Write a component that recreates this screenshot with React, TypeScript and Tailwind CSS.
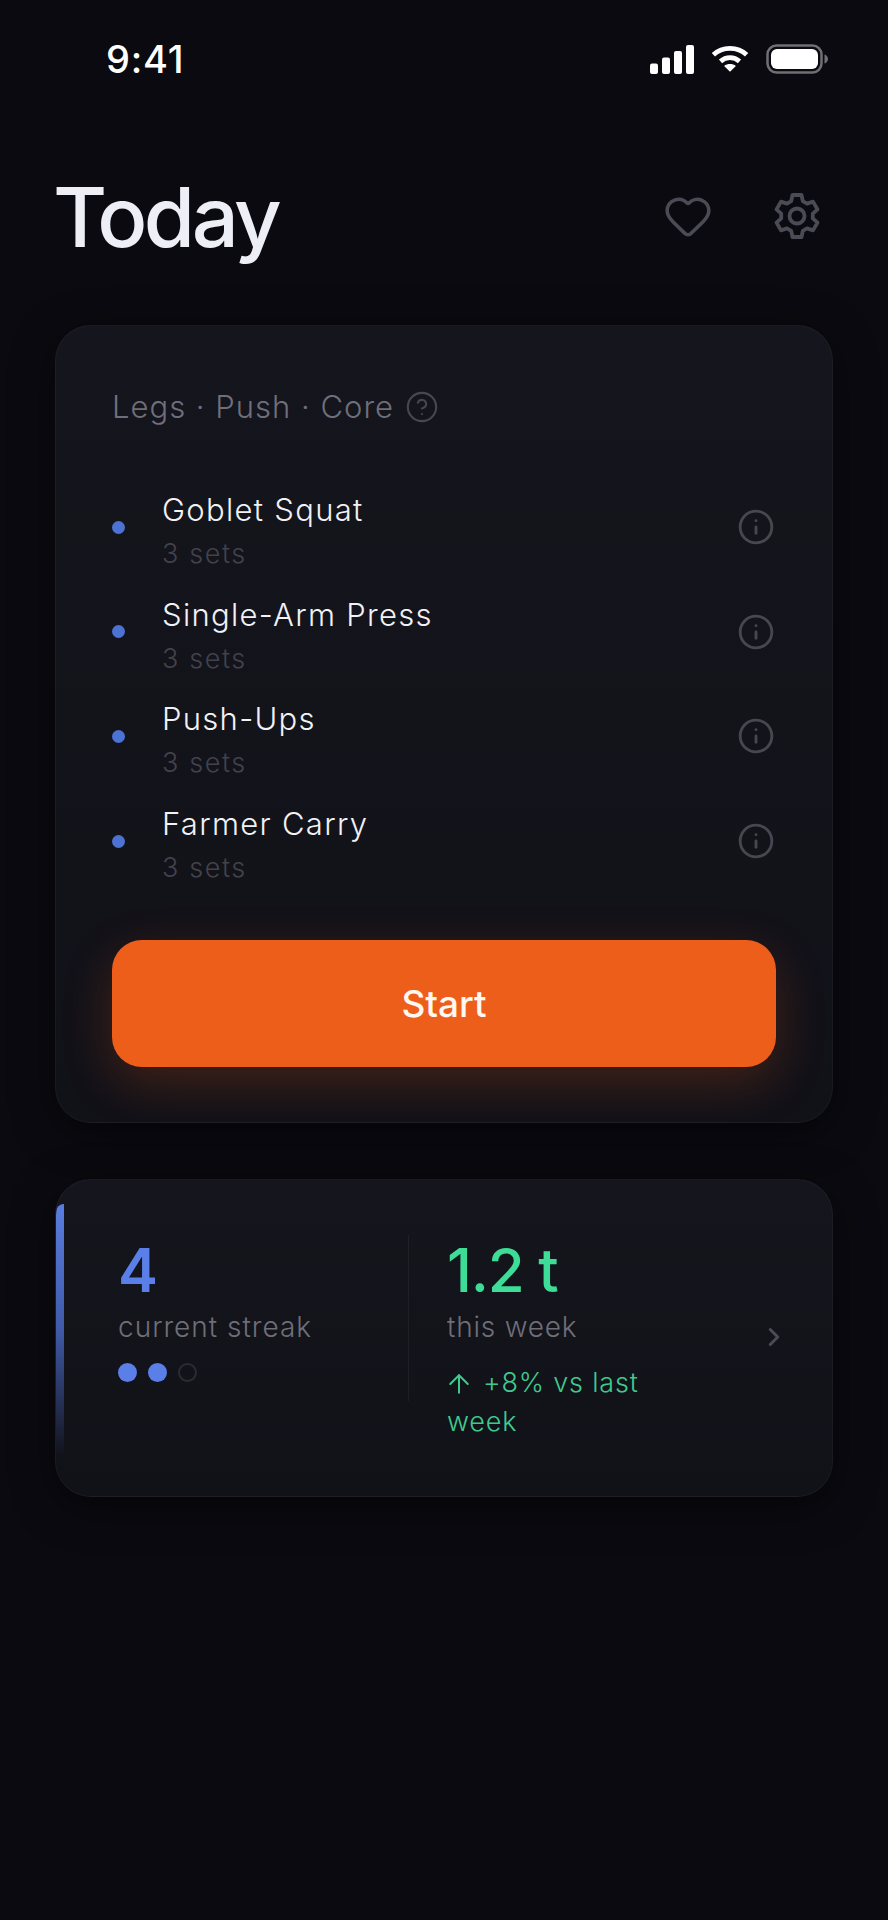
import { Heart, Info, CircleHelp, ChevronRight, ArrowUp } from 'lucide-react';

const exercises = ['Goblet Squat', 'Single-Arm Press', 'Push-Ups', 'Farmer Carry'];

const StatusIcons = () => (
  <div className="flex items-center gap-[17px]">
    <svg width="44" height="29" viewBox="0 0 44 29" fill="#fff">
      <rect x="0" y="18.500" width="8" height="10.500" rx="2" />
      <rect x="12" y="12.500" width="8" height="16.500" rx="2" />
      <rect x="24" y="6" width="8" height="23" rx="2" />
      <rect x="36" y="0" width="8" height="29" rx="2" />
    </svg>
    <svg width="38" height="28" viewBox="0 0 40 28" fill="none" stroke="#fff" strokeWidth="5">
      <path d="M2.500 9.500C12 .5 28 .5 37.500 9.500" />
      <path d="M10 16.500c5.800-5.200 14.200-5.200 20 0" />
      <path d="M20 27.500l-6.200-6.200c3.400-2.800 9-2.800 12.400 0z" fill="#fff" stroke="none" />
    </svg>
    <svg width="63" height="30" viewBox="0 0 63 30" fill="none">
      <rect x="1.500" y="1.500" width="54" height="27" rx="9" stroke="#6f6f74" strokeWidth="2.500" />
      <rect x="5" y="5" width="47" height="20" rx="6" fill="#fff" />
      <path d="M58.500 10.500c2 .5 3.500 2.400 3.500 4.500s-1.500 4-3.500 4.500z" fill="#6f6f74" />
    </svg>
  </div>
);

// six tooth cog, same shape as the reference
const Gear = () => (
  <svg width="52" height="52" viewBox="0 0 52 52" fill="none" stroke="#4b4b56" strokeWidth="3.800" strokeLinejoin="round">
    <path d="M21.500 5h9l1.300 6.200 4.200 2.400 6-2 4.500 7.800-4.700 4.200v4.800l4.700 4.200-4.500 7.800-6-2-4.200 2.400-1.300 6.200h-9l-1.300-6.200-4.200-2.400-6 2-4.500-7.800 4.700-4.200v-4.800l-4.700-4.200 4.500-7.800 6 2 4.200-2.400z" />
    <circle cx="26" cy="26" r="7.500" />
  </svg>
);

export default function App() {
  return (
    <div className="min-h-[1920px] w-full bg-[#0a0a10] font-['Inter',sans-serif]">
      <div className="flex h-[118px] items-start justify-between pl-[106px] pr-[59px] pt-[37px]">
        <span className="text-[38px] leading-[44px] font-medium tracking-[0.8px] text-white">9:41</span>
        <div className="pt-[7px]">
          <StatusIcons />
        </div>
      </div>

      <div className="px-[55px]">
        <div className="flex h-[207px] items-start justify-between pt-[51px]">
          <h1 className="-ml-[2px] text-[83px] leading-[96px] font-medium tracking-[-3.5px] text-[#eeeef6]">Today</h1>
          <div className="flex items-center gap-[58px] pr-[10px] pt-[21px]">
            <Heart size={50} strokeWidth={1.7} className="text-[#4b4b56]" />
            <Gear />
          </div>
        </div>

        <div className="h-[798px] rounded-[36px] border border-white/[0.04] bg-gradient-to-b from-[#15151d] to-[#111118] px-[56px] pt-[56px] shadow-[0_10px_40px_rgba(0,0,0,0.5)]">
          <div className="flex h-[50px] items-center gap-[11px] text-[31px] leading-[50px] font-light tracking-[1px] text-[#6f6f7a]">
            <span>Legs · Push · Core</span>
            <CircleHelp size={34} strokeWidth={1.5} className="text-[#474751]" />
          </div>

          <div className="mt-[43px] flex flex-col">
            {exercises.map((name) => (
              <div key={name} className="flex h-[104.600px] items-center">
                <span className="h-[13px] w-[13px] rounded-full bg-[#4c72d4]" />
                <div className="ml-[37px] flex-1 pt-[8px]">
                  <div className="text-[31px] leading-[44px] font-light tracking-[1.300px] text-[#f1f1f6]">{name}</div>
                  <div className="mt-[2px] text-[27px] leading-[40px] font-light tracking-[1.600px] text-[#42424c]">3 sets</div>
                </div>
                <Info size={38} strokeWidth={1.8} className="mr-[1px] text-[#474751]" />
              </div>
            ))}
          </div>

          <button className="mt-[47px] h-[127px] w-full rounded-[30px] bg-[#ee5e1b] text-[37px] font-medium text-[#fff8f0] shadow-[0_16px_50px_rgba(240,96,27,0.22)]">
            Start
          </button>
        </div>

        <div className="relative mt-[56px] flex h-[318px] overflow-hidden rounded-[36px] border border-white/[0.04] bg-gradient-to-b from-[#15151d] to-[#111118] shadow-[0_10px_40px_rgba(0,0,0,0.5)]">
          <div className="absolute top-[24px] left-0 h-[252px] w-[8px] rounded-tl-[8px] bg-gradient-to-b from-[#5a7de0] via-[#3f5aa8] to-transparent" />
          <div className="w-[352px] pt-[53px] pl-[62px]">
            <div className="text-[60px] leading-[74px] font-semibold text-[#5b7fe8]">4</div>
            <div className="text-[28px] leading-[40px] font-light tracking-[1px] text-[#6e6e79]">current streak</div>
            <div className="mt-[16px] flex gap-[11px]">
              <span className="h-[19px] w-[19px] rounded-full bg-[#5b7fe8]" />
              <span className="h-[19px] w-[19px] rounded-full bg-[#5b7fe8]" />
              <span className="h-[19px] w-[19px] rounded-full border-2 border-[#2b2b33]" />
            </div>
          </div>
          <div className="mt-[55px] h-[166px] w-px bg-white/5" />
          <div className="w-[250px] pt-[53px] pl-[38px] box-content">
            <div className="text-[60px] leading-[74px] font-medium tracking-[-1.200px] text-[#3ddc97]">1.2 t</div>
            <div className="text-[28px] leading-[40px] font-light tracking-[0.8px] text-[#6e6e79]">this week</div>
            <div className="mt-[16px] text-[27px] leading-[39px] font-light tracking-[0.8px] text-[#3fc98e]">
              <ArrowUp size={30} strokeWidth={1.6} className="-my-[4px] mr-[9px] -ml-[3px] inline-block align-[-3px]" />
              +8% vs last week
            </div>
          </div>
          <div className="flex flex-1 items-center justify-end pr-[43px] pb-[2px]">
            <ChevronRight size={30} strokeWidth={2.4} className="text-[#4b4b56]" />
          </div>
        </div>
      </div>
    </div>
  );
}
